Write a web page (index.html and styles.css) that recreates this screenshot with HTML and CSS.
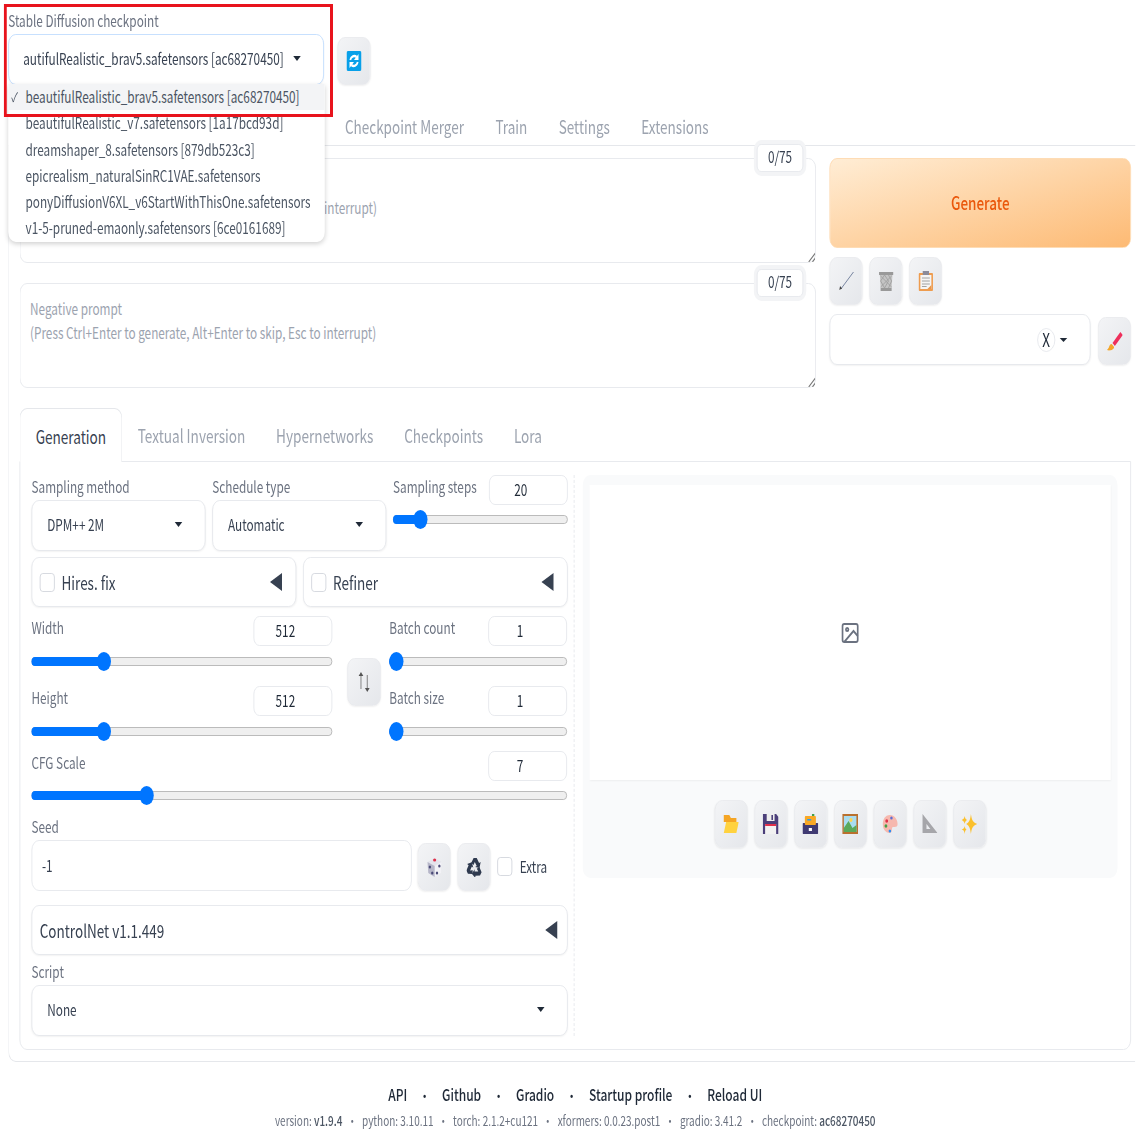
FILE: index.html
```html
<!DOCTYPE html>
<html>
<head>
	<meta charset="UTF-8">
	<title>Stable Diffusion</title>
	<link rel="stylesheet" href="styles.css">
</head>
<body>
<div class="page">

	<div class="top">
		<div class="checkpoint">
			<div class="lbl">Stable Diffusion checkpoint</div>
			<div class="sel sel-open">
				<span class="sel-text">autifulRealistic_brav5.safetensors [ac68270450]</span>
				<i class="caret"></i>
			</div>
			<ul class="options">
				<li class="on"><span class="tick">✓</span>beautifulRealistic_brav5.safetensors [ac68270450]</li>
				<li>beautifulRealistic_v7.safetensors [1a17bcd93d]</li>
				<li>dreamshaper_8.safetensors [879db523c3]</li>
				<li>epicrealism_naturalSinRC1VAE.safetensors</li>
				<li>ponyDiffusionV6XL_v6StartWithThisOne.safetensors</li>
				<li>v1-5-pruned-emaonly.safetensors [6ce0161689]</li>
			</ul>
		</div>
		<button class="tool refresh">
			<svg class="ico" viewBox="0 0 20 20" preserveAspectRatio="none">
				<rect x="0" y="0" width="20" height="20" rx="2" fill="#08a0e9"/>
				<path d="M5 9a5.500 5.500 0 0 1 8.500-3" fill="none" stroke="#fff" stroke-width="2.400"/>
				<path d="M15 11a5.500 5.500 0 0 1-8.500 3" fill="none" stroke="#fff" stroke-width="2.400"/>
				<path d="M16 3v6h-6zM4 17v-6h6z" fill="#fff"/>
			</svg>
		</button>
	</div>

	<div class="nav">
		<span>Checkpoint Merger</span>
		<span>Train</span>
		<span>Settings</span>
		<span>Extensions</span>
	</div>

	<div class="main">
		<div class="prompts">
			<div class="prompt-col">
				<div class="prompt">
					<div class="holder holder-cut">interrupt)</div>
					<div class="count">0/75</div>
					<svg class="grip" viewBox="0 0 8 8"><path d="M1 8 8 1M5 8l3-3" stroke="#777" fill="none"/></svg>
				</div>
				<div class="prompt">
					<div class="holder">Negative prompt<br>(Press Ctrl+Enter to generate, Alt+Enter to skip, Esc to interrupt)</div>
					<div class="count">0/75</div>
					<svg class="grip" viewBox="0 0 8 8"><path d="M1 8 8 1M5 8l3-3" stroke="#777" fill="none"/></svg>
				</div>
			</div>
			<div class="action-col">
				<button class="generate">Generate</button>
				<div class="tools">
					<button class="tool">
						<svg class="ico" viewBox="0 0 20 20" preserveAspectRatio="none"><path d="M19 1 3 18" stroke="#6a7896" stroke-width="1"/><path d="M1 19l1-4 2.500 2.500z" fill="#444"/></svg>
					</button>
					<button class="tool">
						<svg class="ico" viewBox="0 0 20 20" preserveAspectRatio="none">
							<path d="M1 1h18v3H1zM3 17h14v3H3z" fill="#999"/>
							<path d="M2 4h16l-1 13H3z" fill="#c4c4c4"/>
							<path d="M3 5l14 11M17 5 3 16M8 4 3 10l5 7 5-7-5-6M13 4l4 6-4 7" fill="none" stroke="#a0a0a0"/>
						</svg>
					</button>
					<button class="tool">
						<svg class="ico" viewBox="0 0 20 20" preserveAspectRatio="none">
							<rect x="1" y="2" width="18" height="18" rx="1" fill="#ee9c4f"/>
							<rect x="3" y="4" width="14" height="14" fill="#f5f5f5"/>
							<rect x="6" y="0" width="8" height="4" fill="#8b8b9a"/>
							<path d="M5 7h10M5 10h10M5 13h10M5 15.500h6" stroke="#999"/>
							<path d="M12 18l5-4v4z" fill="#e8964a"/>
						</svg>
					</button>
				</div>
				<div class="style-row">
					<div class="style-box">
						<span class="clear">X</span>
						<i class="caret"></i>
					</div>
					<button class="tool">
						<svg class="ico" viewBox="0 0 20 20" preserveAspectRatio="none">
							<path d="M17 1 7 12l3 3L20 4z" fill="#ee2f5b"/>
							<path d="M6 13c-3 0-3 3-4 4l-2 2c3 1 9 0 9-3z" fill="#f4a62a"/>
						</svg>
					</button>
				</div>
			</div>
		</div>

		<div class="subtabs">
			<span class="active">Generation</span>
			<span>Textual Inversion</span>
			<span>Hypernetworks</span>
			<span>Checkpoints</span>
			<span>Lora</span>
		</div>

		<div class="panel">
			<div class="settings">

				<div class="row row-sampler">
					<div class="field">
						<div class="lbl">Sampling method</div>
						<div class="sel"><span class="sel-text">DPM++ 2M</span><i class="caret"></i></div>
					</div>
					<div class="field">
						<div class="lbl">Schedule type</div>
						<div class="sel"><span class="sel-text">Automatic</span><i class="caret"></i></div>
					</div>
					<div class="field steps">
						<div class="head">
							<div class="lbl">Sampling steps</div>
							<div class="num num-steps">20</div>
						</div>
						<div class="zone zone-steps">
							<div class="slider">
								<div class="fill" style="width:15.6%"></div>
								<div class="thumb" style="left:15.6%"></div>
							</div>
						</div>
					</div>
				</div>

				<div class="row row-accordions">
					<div class="accordion">
						<span class="check"></span><span class="acc-name">Hires. fix</span><i class="tri"></i>
					</div>
					<div class="accordion">
						<span class="check"></span><span class="acc-name">Refiner</span><i class="tri"></i>
					</div>
				</div>

				<div class="row row-size">
					<div class="size-col">
						<div class="head"><div class="lbl">Width</div><div class="num">512</div></div>
						<div class="zone"><div class="slider"><div class="fill" style="width:24%"></div><div class="thumb" style="left:24%"></div></div></div>
						<div class="head head-second"><div class="lbl">Height</div><div class="num">512</div></div>
						<div class="zone"><div class="slider"><div class="fill" style="width:24%"></div><div class="thumb" style="left:24%"></div></div></div>
					</div>
					<button class="tool swap">
						<svg class="ico" viewBox="0 0 20 20" preserveAspectRatio="none">
							<path d="M6 2v15M14 3v15" stroke="#777" stroke-width="1"/>
							<path d="M6 0 3 4h6zM14 20l-3-4h6z" fill="#555"/>
						</svg>
					</button>
					<div class="batch-col">
						<div class="head"><div class="lbl">Batch count</div><div class="num">1</div></div>
						<div class="zone"><div class="slider"><div class="fill" style="width:4%"></div><div class="thumb" style="left:4%"></div></div></div>
						<div class="head head-second"><div class="lbl">Batch size</div><div class="num">1</div></div>
						<div class="zone"><div class="slider"><div class="fill" style="width:4%"></div><div class="thumb" style="left:4%"></div></div></div>
					</div>
				</div>

				<div class="cfg">
					<div class="head"><div class="lbl">CFG Scale</div><div class="num">7</div></div>
					<div class="zone zone-cfg"><div class="slider"><div class="fill" style="width:21.5%"></div><div class="thumb" style="left:21.5%"></div></div></div>
				</div>

				<div class="lbl lbl-block seed-lbl">Seed</div>
				<div class="row row-seed">
					<div class="seed-input">-1</div>
					<button class="tool">
						<svg class="ico" viewBox="0 0 20 20" preserveAspectRatio="none">
							<path d="M10 1 19 5 18 16 10 20 2 16 1 5z" fill="#e4e4ec"/>
							<path d="M10 9v11l8-4 1-11z" fill="#f2f2f6"/>
							<path d="M1 5l9 4v11l-8-4z" fill="#b6b6c8"/>
							<ellipse cx="10" cy="3" rx="2" ry="1.500" fill="#e0304a"/>
							<circle cx="4" cy="10" r="1.500" fill="#4a4a78"/>
							<circle cx="7" cy="16" r="1.500" fill="#4a4a78"/>
							<circle cx="13" cy="16" r="1.500" fill="#4a4a78"/>
							<circle cx="16" cy="9" r="1.500" fill="#4a4a78"/>
						</svg>
					</button>
					<button class="tool">
						<svg class="ico" viewBox="0 0 20 20" preserveAspectRatio="none" fill="#2f3a4f">
							<path d="M6 6 9 1h4l3 5 2-1-1.500 6-5.500-1 2-1-2.500-4-1.500 3z"/>
							<path transform="rotate(120 10 11)" d="M6 6 9 1h4l3 5 2-1-1.500 6-5.500-1 2-1-2.500-4-1.500 3z"/>
							<path transform="rotate(240 10 11)" d="M6 6 9 1h4l3 5 2-1-1.500 6-5.500-1 2-1-2.500-4-1.500 3z"/>
						</svg>
					</button>
					<span class="check"></span>
					<span class="extra">Extra</span>
				</div>

				<div class="accordion controlnet">
					<span class="acc-name">ControlNet v1.1.449</span><i class="tri"></i>
				</div>

				<div class="lbl lbl-block">Script</div>
				<div class="sel"><span class="sel-text">None</span><i class="caret"></i></div>
			</div>

			<div class="output">
				<div class="gallery">
					<svg class="img-ico" viewBox="0 0 24 24" preserveAspectRatio="none" fill="none" stroke="#6b7280" stroke-width="2">
						<rect x="3" y="3" width="18" height="18" rx="2"/>
						<circle cx="8.500" cy="8.500" r="1.500"/>
						<path d="M21 15 16 10 5 21"/>
					</svg>
				</div>
				<div class="out-tools">
					<button class="tool"><svg class="ico" viewBox="0 0 20 20" preserveAspectRatio="none"><path d="M1 1h7l2 3h7v4H1z" fill="#f5a524"/><path d="M1 19 4 8h16l-3 11z" fill="#ffd23f"/></svg></button>
					<button class="tool"><svg class="ico" viewBox="0 0 20 20" preserveAspectRatio="none"><path d="M0 0h17l3 3v17H0z" fill="#4b3f7a"/><rect x="5" y="0" width="10" height="7" fill="#eee"/><rect x="11" y="1" width="2" height="5" fill="#4b3f7a"/><rect x="3" y="10" width="14" height="10" fill="#f2f2f2"/><rect x="3" y="10" width="14" height="2" fill="#e0304a"/></svg></button>
					<button class="tool"><svg class="ico" viewBox="0 0 20 20" preserveAspectRatio="none"><rect x="0" y="9" width="20" height="11" rx="1" fill="#3f3a72"/><rect x="3" y="2" width="14" height="9" rx="1" fill="#f9a825"/><rect x="6" y="5" width="5" height="1.500" fill="#2a9df4"/><rect x="12" y="0" width="3" height="2" fill="#43a047"/><rect x="8" y="14" width="4" height="3" fill="#fff"/></svg></button>
					<button class="tool"><svg class="ico" viewBox="0 0 20 20" preserveAspectRatio="none"><rect x="0" y="0" width="20" height="20" fill="#b9702e"/><rect x="2" y="2" width="16" height="16" fill="#a8dcf0"/><circle cx="11" cy="6" r="2" fill="#ffd54f"/><path d="M2 14 8 7l5 7 5-3v7H2z" fill="#5aa95a"/></svg></button>
					<button class="tool"><svg class="ico" viewBox="0 0 20 20" preserveAspectRatio="none"><path d="M10 1c6 0 10 5 10 9 0 3-3 3-6 3-2 0-1 3-2 5-2 2-6 1-9-2-4-5-2-15 7-15z" fill="#f6b8ae"/><circle cx="6" cy="7" r="1.800" fill="#e0304a"/><circle cx="12" cy="4" r="1.600" fill="#5b6bd5"/><circle cx="5" cy="12" r="1.800" fill="#43a047"/><circle cx="10" cy="17" r="1.600" fill="#2a8df4"/></svg></button>
					<button class="tool"><svg class="ico" viewBox="0 0 20 20" preserveAspectRatio="none"><path fill-rule="evenodd" d="M1 0l19 19H1zM6 10v5h5z" fill="#a6a6aa"/></svg></button>
					<button class="tool"><svg class="ico" viewBox="0 0 20 20" preserveAspectRatio="none"><path d="M12 0c1 6 2 8 8 10-6 2-7 4-8 10-1-6-2-8-6-10 4-2 5-4 6-10zM4 2c.5 2 1 3 3 4-2 1-2.500 2-3 4-.5-2-1-3-4-4 3-1 3.500-2 4-4zM4 12c.5 2 1 3 2.500 3.500C5 16 4.500 17 4 20c-.5-3-1-4-4-4.500C3 15 3.500 14 4 12z" fill="#fbc02d"/></svg></button>
				</div>
			</div>
		</div>
	</div>

	<div class="footer">
		<div class="links">
			<a>API</a><b>•</b><a>Github</a><b>•</b><a>Gradio</a><b>•</b><a>Startup profile</a><b>•</b><a>Reload UI</a>
		</div>
		<div class="versions">
			version: <strong>v1.9.4</strong><b>•</b>python: 3.10.11<b>•</b>torch: 2.1.2+cu121<b>•</b>xformers: 0.0.23.post1<b>•</b>gradio: 3.41.2<b>•</b>checkpoint: <strong>ac68270450</strong>
		</div>
	</div>

	<div class="marker"></div>
</div>
</body>
</html>
```

FILE: styles.css
```css
* {
	margin: 0;
	padding: 0;
	box-sizing: border-box;
}
html, body {
	width: 1136px;
	height: 1136px;
	overflow: hidden;
	background: #fff;
}
/* the whole screen is narrowed sideways, so everything below is 4/3 wide */
.page {
	position: relative;
	width: 1514px;
	height: 1136px;
	overflow: hidden;
	padding: 12px 5px 0 11px;
	transform: scaleX(0.75);
	transform-origin: 0 0;
	font-family: "Noto Sans CJK SC", "Source Sans Pro", sans-serif;
	font-size: 15.700px;
	color: #374151;
}
button {
	font-family: inherit;
	cursor: pointer;
}
ul {
	list-style: none;
}

.lbl {
	color: #6b7280;
	font-size: 15.700px;
	line-height: 18px;
	white-space: nowrap;
}
.lbl-block {
	height: 25px;
	padding-top: 3px;
}

/* top */
.top {
	display: flex;
	align-items: flex-end;
	height: 73px;
}
.checkpoint {
	position: relative;
	width: 421px;
}
.checkpoint .lbl {
	height: 22px;
	line-height: 18px;
}
.sel {
	display: flex;
	align-items: center;
	justify-content: space-between;
	height: 51px;
	padding: 0 30px 3px 20px;
	background: #fff;
	border: 1px solid #e5e7eb;
	border-radius: 10px;
	box-shadow: 0 1px 2px rgba(0, 0, 0, 0.05);
	color: #374151;
}
.sel-open {
	border-color: #bfdbfe;
	padding: 0 30px 3px 19px;
	overflow: hidden;
}
.sel-text {
	white-space: nowrap;
}
.caret {
	display: block;
	flex: none;
	width: 0;
	height: 0;
	border-left: 5.500px solid transparent;
	border-right: 5.500px solid transparent;
	border-top: 5px solid #1f2937;
}
.options {
	position: absolute;
	top: 72px;
	left: 0;
	z-index: 5;
	width: 422px;
	height: 158px;
	background: #fff;
	border-radius: 0 0 10px 10px;
	box-shadow: 0 2px 6px rgba(0, 0, 0, 0.18);
	overflow: hidden;
}
.options li {
	position: relative;
	height: 26.300px;
	line-height: 26px;
	padding-left: 23px;
	color: #4b5563;
	white-space: nowrap;
}
.options .on {
	background: #f3f4f6;
}
.tick {
	position: absolute;
	left: 4px;
	font-size: 13px;
}
.tool {
	display: flex;
	flex: none;
	align-items: center;
	justify-content: center;
	width: 44px;
	height: 48px;
	background: linear-gradient(to bottom right, #f3f4f6, #e5e7eb);
	border: 1px solid #e8e9ed;
	border-radius: 10px;
	box-shadow: 0 1px 2px rgba(0, 0, 0, 0.06);
}
.ico {
	display: block;
	width: 21px;
	height: 20px;
}
.refresh {
	margin-left: 18px;
}
.refresh .ico {
	width: 20px;
}

/* main tabs */
.nav {
	display: flex;
	align-items: center;
	height: 37px;
	margin-top: 24px;
	margin-right: -5px;
	padding: 0 0 3px 428px;
	border-bottom: 1px solid #e5e7eb;
	font-size: 18px;
	color: #9ca3af;
	white-space: nowrap;
}
.nav span {
	padding: 0 21px;
}

.main {
	position: relative;
	height: 916px;
	margin-right: -5px;
	padding: 12px 6px 0 14px;
	border-left: 1px solid #e5e7eb;
	border-bottom: 1px solid #e5e7eb;
	border-radius: 0 0 0 10px;
}
.prompts {
	display: flex;
	gap: 18px;
}
.prompt-col {
	display: flex;
	flex-direction: column;
	gap: 20px;
	width: 1062px;
}
.prompt {
	position: relative;
	height: 105px;
	padding: 13px 13px;
	background: #fff;
	border: 1px solid #e5e7eb;
	border-radius: 10px;
}
.holder {
	line-height: 24px;
	color: #9ca3af;
	white-space: nowrap;
}
/* the front of this line sits under the open dropdown */
.holder-cut {
	padding: 24px 0 0 392px;
}
.count {
	position: absolute;
	top: -15px;
	right: 16px;
	width: 62px;
	height: 28px;
	line-height: 24px;
	text-align: center;
	background: #fff;
	border: 1px solid #e5e7eb;
	border-radius: 6px;
	box-shadow: 0 0 0 4px #f3f4f6;
}
.grip {
	position: absolute;
	right: 0;
	bottom: 0;
	width: 10px;
	height: 10px;
}
.action-col {
	flex: 1;
}
.generate {
	display: block;
	width: 100%;
	height: 90px;
	padding-bottom: 2px;
	background: linear-gradient(to bottom right, #ffedd5, #fdba74);
	border: 1px solid #fed7aa;
	border-radius: 10px;
	color: #ea580c;
	font-size: 18px;
	font-weight: 500;
}
.tools {
	display: flex;
	gap: 9px;
	margin-top: 9px;
}
.style-row {
	display: flex;
	align-items: flex-end;
	gap: 10px;
	margin-top: 9px;
}
.style-box {
	display: flex;
	align-items: center;
	justify-content: flex-end;
	flex: 1;
	height: 51px;
	padding-right: 30px;
	background: #fff;
	border: 1px solid #e5e7eb;
	border-radius: 10px;
	box-shadow: 0 1px 2px rgba(0, 0, 0, 0.05);
}
.style-box .caret {
	border-left-width: 5px;
	border-right-width: 5px;
	border-top-width: 4px;
}
.clear {
	width: 24px;
	height: 24px;
	margin-right: 6px;
	font-size: 18px;
	line-height: 21px;
	text-align: center;
	border: 1px solid #e5e7eb;
	border-radius: 50%;
	color: #1f2937;
}

/* generation tabs */
.subtabs {
	display: flex;
	position: relative;
	height: 54px;
	margin-top: 20px;
	font-size: 18.150px;
	color: #9ca3af;
	white-space: nowrap;
}
.subtabs span {
	padding: 0 20.500px;
	line-height: 54px;
}
.subtabs .active {
	position: relative;
	z-index: 1;
	background: #fff;
	color: #374151;
	border: 1px solid #e5e7eb;
	border-bottom: none;
	border-radius: 10px 10px 0 0;
}
.panel {
	display: flex;
	height: 589px;
	margin-top: -1px;
	padding: 13px 17px 13px 15px;
	border: 1px solid #e5e7eb;
	border-radius: 0 0 10px 10px;
}
.settings {
	width: 724px;
	padding-right: 8px;
	border-right: 1px dashed #e5e7eb;
}
.row {
	display: flex;
}
.row-sampler {
	gap: 9px;
}
.field {
	width: 232px;
}
.field .lbl {
	height: 25px;
	padding-top: 3px;
}
.steps {
	flex: 1;
}
.head {
	display: flex;
	align-items: center;
	justify-content: space-between;
	height: 30px;
}
.head .lbl {
	margin-bottom: 6px;
}
.steps .lbl {
	height: 18px;
	padding: 0;
}
.num {
	width: 105px;
	height: 30px;
	padding-right: 20px;
	line-height: 27px;
	text-align: center;
	background: #fff;
	border: 1px solid #e5e7eb;
	border-radius: 8px;
	color: #1f2937;
}
.zone {
	display: flex;
	align-items: center;
	height: 30px;
}
.zone-steps {
	height: 28px;
}
.zone-cfg {
	height: 28px;
}
.slider {
	position: relative;
	width: 100%;
	height: 9px;
	background: #efefef;
	border: 1px solid #b2b2b2;
	border-radius: 5px;
}
.fill {
	position: absolute;
	top: -1px;
	left: -1px;
	height: 9px;
	background: #0075ff;
	border-radius: 5px 0 0 5px;
}
.thumb {
	position: absolute;
	top: -6px;
	width: 19px;
	height: 19px;
	margin-left: -10px;
	background: #0075ff;
	border-radius: 50%;
}
.row-accordions {
	gap: 9px;
	margin-top: 6px;
}
.accordion {
	display: flex;
	flex: 1;
	align-items: center;
	height: 50px;
	padding: 0 18px 0 10px;
	background: #fff;
	border: 1px solid #e5e7eb;
	border-radius: 10px;
	box-shadow: 0 1px 2px rgba(0, 0, 0, 0.05);
}
.check {
	display: block;
	flex: none;
	width: 20px;
	height: 19px;
	background: #fff;
	border: 1px solid #d1d5db;
	border-radius: 4px;
}
.acc-name {
	flex: 1;
	margin-left: 9px;
	padding-bottom: 1px;
	font-size: 18px;
	color: #374151;
}
.tri {
	display: block;
	width: 0;
	height: 0;
	border-top: 9px solid transparent;
	border-bottom: 9px solid transparent;
	border-right: 16px solid #374151;
}
.row-size {
	margin-top: 9px;
}
.size-col {
	width: 401px;
}
.batch-col {
	flex: 1;
	margin-right: 1px;
}
.head-second {
	margin-top: 10px;
}
.swap {
	width: 45px;
	margin: 42px 11px 0 20px;
}
.cfg {
	margin-top: 5px;
	margin-right: 1px;
}
.seed-lbl {
	margin-top: 6px;
}
.row-seed {
	align-items: flex-end;
}
.seed-input {
	width: 507px;
	height: 51px;
	padding-left: 13px;
	line-height: 50px;
	background: #fff;
	border: 1px solid #e5e7eb;
	border-radius: 10px;
	margin-right: 8px;
}
.row-seed .tool {
	margin-right: 9px;
}
.row-seed .check {
	align-self: flex-end;
	margin-bottom: 15px;
}
.extra {
	margin: 0 0 12px 10px;
	line-height: 24px;
}
.controlnet {
	margin: 14px 0 5px;
	flex: none;
	padding-right: 13px;
}
.controlnet .acc-name {
	margin-left: 0;
}

/* output */
.output {
	flex: 1;
	height: 403px;
	margin-left: 11px;
	padding: 10px 9px 0;
	background: #f9fafb;
	border-radius: 10px;
}
.gallery {
	display: flex;
	align-items: center;
	justify-content: center;
	height: 295px;
	background: #fff;
	box-shadow: 0 1px 2px rgba(0, 0, 0, 0.05);
}
.img-ico {
	width: 27px;
	height: 24px;
}
.out-tools {
	display: flex;
	justify-content: center;
	gap: 9px;
	margin-top: 20px;
}

/* footer */
.footer {
	margin-left: 14px;
	text-align: center;
}
.links {
	margin-top: 20px;
	font-size: 16px;
	font-weight: 500;
	line-height: 24px;
	color: #1f2937;
}
.links b {
	margin: 0 16.700px;
	font-size: 13px;
}
.versions {
	margin-top: 1px;
	font-size: 13.300px;
	line-height: 24px;
	color: #6b7280;
}
.versions b {
	margin: 0 6.400px;
	font-weight: 400;
}
.versions strong {
	font-weight: 500;
	color: #4b5563;
}

/* red box round the dropdown */
.marker {
	position: absolute;
	top: 4px;
	left: 5px;
	z-index: 9;
	width: 439px;
	height: 113px;
	border: 3px solid #e8131c;
	border-left-width: 4px;
	border-right-width: 4px;
}
```
